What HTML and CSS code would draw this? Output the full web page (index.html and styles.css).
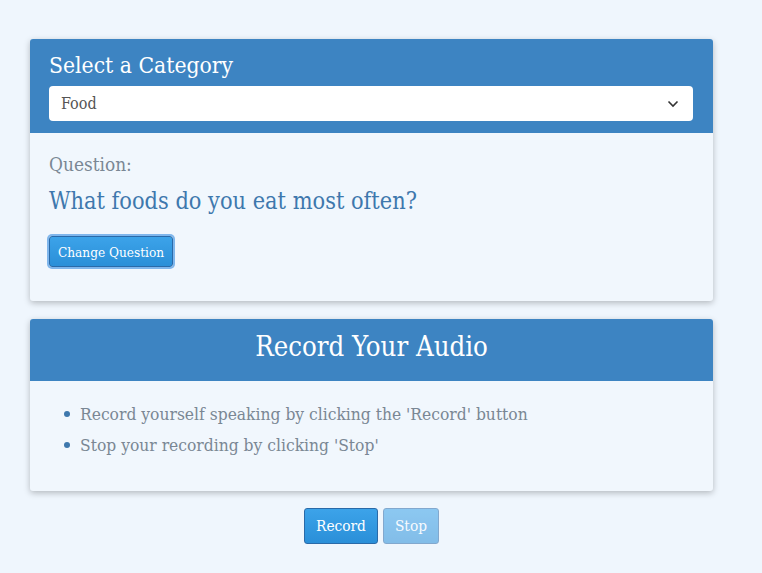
FILE: index.html
```html
<!DOCTYPE html>
<html lang="en">
<head>
  <meta charset="UTF-8" />
  <title>Speaking Practice</title>
  <link rel="stylesheet" href="styles.css">
</head>
<body>
  <div class="panel">
    <div class="panel-heading">
      <h3 class="heading-left">Select a Category</h3>
      <div class="select-wrap">
        <select id="category">
          <option>Food</option>
          <option>Travel</option>
          <option>Family</option>
        </select>
        <svg class="caret" width="12" height="8" viewBox="0 0 12 8"><path d="M1.5 1.5 L6 6 L10.5 1.5" fill="none" stroke="#333" stroke-width="1.6"/></svg>
      </div>
    </div>
    <div class="panel-body">
      <div class="q-label">Question:</div>
      <div class="q-text">What foods do you eat most often?</div>
      <button class="btn btn-focus">Change Question</button>
    </div>
  </div>

  <div class="panel panel-last">
    <div class="panel-heading centered">
      <h3>Record Your Audio</h3>
    </div>
    <div class="panel-body list-body">
      <ul class="steps">
        <li>Record yourself speaking by clicking the 'Record' button</li>
        <li>Stop your recording by clicking 'Stop'</li>
      </ul>
    </div>
  </div>

  <div class="controls">
    <button class="btn btn-lg">Record</button>
    <button class="btn btn-lg" disabled>Stop</button>
  </div>
</body>
</html>
```
FILE: styles.css
```css
body {
  margin: 0;
  padding: 39px 49px 0 30px;
  background: #eff6fd;
  font-family: 'DejaVu Serif Condensed', 'DejaVu Serif', serif;
  font-weight: 300;
}

.panel {
  background: #f1f7fd;
  box-shadow: 0 2px 6px rgba(0,0,0,0.25);
  border-radius: 3px;
  margin-bottom: 18px;
}

.panel-last {
  margin-bottom: 17px;
}

.panel-heading {
  background: #3d84c2;
  color: #ffffff;
  padding: 12px 20px 12px 19px;
  border-radius: 3px 3px 0 0;
}

.panel-heading h3 {
  margin: 0;
  font-size: 22.7px;
  font-weight: normal;
  line-height: 28px;
}

.heading-left {
  margin-bottom: 7px !important;
}

.centered {
  text-align: center;
  padding: 10px 20px 16px;
}

.centered h3 {
  font-size: 27.3px;
  line-height: 36px;
}

.select-wrap {
  position: relative;
}

select {
  width: 100%;
  height: 35px;
  border: 0;
  border-radius: 4px;
  background: #ffffff;
  padding: 0 12px;
  font-family: inherit;
  font-size: 16px;
  color: #555;
  appearance: none;
}

.caret {
  position: absolute;
  right: 14px;
  top: 14px;
}

.panel-body {
  padding: 18px 20px 34px 19px;
}

.q-label {
  font-size: 18.9px;
  color: #7a8794;
  line-height: 26px;
}

.q-text {
  font-size: 23.3px;
  color: #3e78ad;
  margin: 8px 0 19px;
  line-height: 32px;
}

.btn {
  font-family: inherit;
  color: #ffffff;
  background: linear-gradient(to bottom, #3ca3e9, #2a8fd8);
  border: 1px solid #2a6aa8;
  border-radius: 3px;
  cursor: pointer;
}

.btn-focus {
  font-size: 13.5px;
  height: 31px;
  padding: 0 8px;
  box-shadow: 0 0 0 2px #7fb6ec;
}

.list-body {
  padding: 18px 20px 30px 19px;
}

.steps {
  margin: 0;
  padding-left: 30px;
  color: #7a8794;
  font-size: 17.3px;
  line-height: 31px;
  list-style: none;
}

.steps li::before {
  content: '';
  display: inline-block;
  width: 6px;
  height: 6px;
  border-radius: 50%;
  background: #3e78ad;
  margin: 0 10px 3px -15px;
}

.controls {
  display: flex;
  justify-content: center;
  gap: 5px;
}

.btn-lg {
  font-size: 15.3px;
  height: 36px;
  padding: 0 11px;
}

.btn-lg:disabled {
  opacity: 0.55;
  cursor: default;
}
```
